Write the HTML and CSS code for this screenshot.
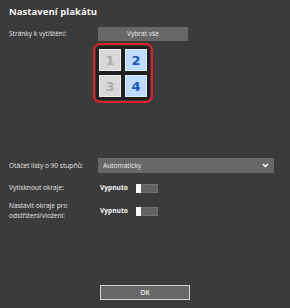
FILE: index.html
```html
<!DOCTYPE html>
<html>
<head>
  <meta charset="UTF-8">
  <title>Nastavení plakátu</title>
  <link rel="stylesheet" href="styles.css">
</head>
<body>
  <div class="panel">
    <h1 class="title">Nastavení plakátu</h1>

    <div class="row row-pages">
      <div class="label">Stránky k vytištění:</div>
      <button class="btn btn-select">Vybrat vše</button>
    </div>

    <div class="pages">
      <div class="pages-grid">
        <div class="tile">1</div>
        <div class="tile tile-on">2</div>
        <div class="tile">3</div>
        <div class="tile tile-on">4</div>
      </div>
    </div>

    <div class="row row-rotate">
      <div class="label">Otáčet listy o 90 stupňů:</div>
      <div class="select">
        <span>Automaticky</span>
        <svg class="chevron" width="7" height="5" viewBox="0 0 7 5">
          <path d="M1 1 L3.5 3.5 L6 1" fill="none" stroke="#fff" stroke-width="1.4"/>
        </svg>
      </div>
    </div>

    <div class="row row-margins">
      <div class="label">Vytisknout okraje:</div>
      <div class="value">Vypnuto</div>
      <div class="toggle"><span class="knob"></span></div>
    </div>

    <div class="row row-cut">
      <div class="label">Nastavit okraje pro odstřižení/vložení:</div>
      <div class="value">Vypnuto</div>
      <div class="toggle"><span class="knob"></span></div>
    </div>

    <div class="footer">
      <button class="btn btn-ok">OK</button>
    </div>
  </div>
</body>
</html>
```

FILE: styles.css
```css
* {
  margin: 0;
  padding: 0;
  box-sizing: border-box;
}

body {
  font-family: "Open Sans", "Noto Sans", Arial, sans-serif;
  background: #3b3b3b;
  color: #ececec;
  width: 290px;
  height: 308px;
  overflow: hidden;
}

.panel {
  padding: 5px 0 0 9px;
}

/* 标题 */
.title {
  font-size: 9.5px;
  font-weight: 700;
  color: #f4f4f4;
  line-height: 14px;
  letter-spacing: 0.05px;
}

/* 行 */
.row {
  display: flex;
  align-items: center;
}

.label {
  width: 89px;
  font-size: 6.6px;
  line-height: 10px;
  color: #e6e6e6;
}

.row-pages {
  margin-top: 8px;
}

.btn {
  background: #676767;
  border: none;
  color: #f2f2f2;
  font-family: inherit;
  font-size: 6.6px;
  line-height: 10px;
  cursor: pointer;
}

.btn-select {
  width: 90px;
  height: 14px;
}

/* 页面选择 */
.pages {
  width: 60px;
  height: 60px;
  margin: 2px 0 0 84px;
  border: 2px solid #e0202a;
  border-radius: 7px;
  padding: 1px;
}

.pages-grid {
  background: #202020;
  border-radius: 4px;
  padding: 3px;
  display: grid;
  grid-template-columns: 22px 22px;
  grid-template-rows: 22px 22px;
  gap: 4px;
}

.tile {
  background: #d8d8d8;
  border: 1px solid #efefef;
  color: #ababab;
  font-family: "DejaVu Sans", Arial, sans-serif;
  font-weight: 700;
  font-size: 13px;
  display: flex;
  align-items: center;
  justify-content: center;
}

.tile-on {
  background: #bfdbff;
  border-color: #dcebff;
  color: #1c55b6;
}

/* 旋转 */
.row-rotate {
  margin-top: 55px;
}

.select {
  width: 176px;
  height: 15px;
  background: #676767;
  display: flex;
  align-items: center;
  justify-content: space-between;
  padding: 0 5px 0 5px;
  font-size: 6.6px;
  line-height: 10px;
  color: #f0f0f0;
}

.chevron {
  display: block;
}

/* 开关 */
.row-margins {
  margin-top: 10px;
}

.row-cut {
  margin-top: 8px;
}

.value {
  width: 38px;
  padding-left: 2px;
  font-size: 6.6px;
  line-height: 10px;
  font-weight: 700;
  color: #f6f6f6;
}

.toggle {
  width: 22px;
  height: 9px;
  background: #636363;
  border: 1px solid #707070;
  position: relative;
}

.knob {
  position: absolute;
  left: -1px;
  top: -1px;
  width: 5px;
  height: 9px;
  background: #fafafa;
}

/* 底部 */
.footer {
  margin-top: 64px;
  padding-left: 91px;
}

.btn-ok {
  display: block;
  width: 90px;
  height: 15px;
  border: 1px solid #d2d2d2;
  font-weight: 600;
}
```
